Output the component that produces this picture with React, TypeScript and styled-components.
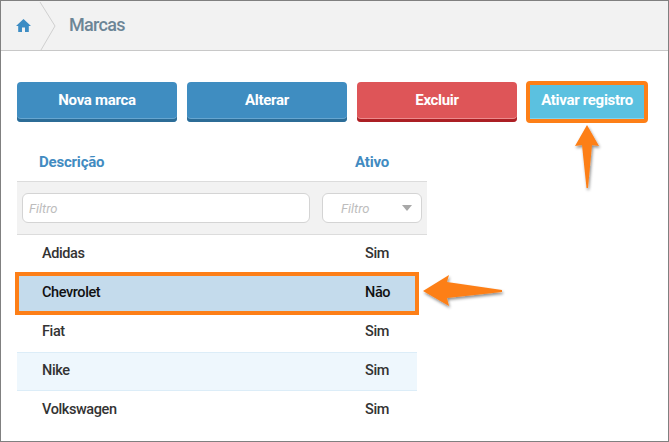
import React from "react";
import styled, { createGlobalStyle } from "styled-components";

const Global = createGlobalStyle`
  html, body { margin: 0; padding: 0; background: #fff; }
  * { box-sizing: border-box; }
`;

const Page = styled.div`
  position: relative;
  width: 669px;
  height: 442px;
  border: 1px solid #808080;
  background: #fff;
  overflow: hidden;
  font-family: Roboto, "Liberation Sans", sans-serif;
  color: #333;
`;

const Breadcrumb = styled.header`
  display: flex;
  align-items: center;
  height: 50px;
  background: #f2f2f2;
  border-bottom: 1px solid #c8c8c8;
`;

const HomeLink = styled.div`
  display: flex;
  align-items: center;
  width: 53px;
  height: 49px;
  padding-left: 15px;
  flex: none;
  position: relative;
`;

const Chevron = styled.svg`
  position: absolute;
  left: 38px;
  top: 0;
`;

const Crumb = styled.span`
  margin-left: 15px;
  padding-bottom: 2px;
  font-size: 18px;
  font-weight: 500;
  letter-spacing: -0.7px;
  color: #6c8596;
`;

const Content = styled.main`
  padding: 31px 0 0 16px;
`;

const Toolbar = styled.div`
  display: flex;
  gap: 10px;
`;

const Button = styled.button<{ $bg: string; $edge: string; $line: string; $w: number; $mark?: boolean }>`
  width: ${(p) => p.$w}px;
  height: 40px;
  padding: 0 0 4px;
  border: 0;
  border-radius: 4px;
  background: ${(p) => p.$bg};
  box-shadow: inset 0 -3px 0 ${(p) => p.$edge}, inset 0 -4px 0 ${(p) => p.$line};
  color: #fff;
  font-family: inherit;
  font-size: 15px;
  font-weight: 700;
  letter-spacing: -0.3px;
  ${(p) => p.$mark && "outline: 4px solid #fd7f17; outline-offset: -3px; border-radius: 3px;"}
`;

const Table = styled.div`
  margin-top: 20px;
  width: 410px;
`;

const HeadRow = styled.div`
  display: grid;
  grid-template-columns: 338px 72px;
  height: 39px;
  align-items: center;
  font-size: 15px;
  font-weight: 700;
  letter-spacing: -0.2px;
  color: #428bc1;
`;

const HeadDesc = styled.span`
  padding-left: 22px;
`;

const HeadActive = styled.span`
  padding-left: 0;
`;

const FilterRow = styled.div`
  display: flex;
  align-items: center;
  height: 54px;
  padding: 0 5px;
  gap: 12px;
  background: #f2f2f2;
  border-top: 1px solid #dcdcdc;
  border-bottom: 1px solid #dcdcdc;
`;

const FilterInput = styled.div`
  display: flex;
  align-items: center;
  width: 288px;
  height: 30px;
  padding-left: 6px;
  background: #fff;
  border: 1px solid #d4d4d4;
  border-radius: 6px;
  font-size: 13px;
  font-style: italic;
  color: #bdbdbd;
`;

const FilterSelect = styled(FilterInput)`
  width: 100px;
  padding: 0 9px 0 18px;
  justify-content: space-between;
`;

const Caret = styled.span`
  width: 0;
  height: 0;
  border-left: 5px solid transparent;
  border-right: 5px solid transparent;
  border-top: 6px solid #a8a8a8;
`;

const Row = styled.div<{ $state?: "selected" | "alt" }>`
  display: grid;
  grid-template-columns: 348px 52px;
  width: 400px;
  height: 39px;
  padding-bottom: 3px;
  align-items: center;
  font-size: 14.5px;
  font-weight: 500;
  letter-spacing: -0.4px;
  color: ${(p) => (p.$state === "selected" ? "#111" : "#333")};
  background: ${(p) => (p.$state === "selected" ? "#c4dbec" : p.$state === "alt" ? "#eef7fd" : "#fff")};
  ${(p) => p.$state === "alt" && "box-shadow: inset 0 1px 0 #dcedf8, inset 0 -1px 0 #dcedf8;"}
  ${(p) => p.$state === "selected" && "outline: 4px solid #fd7f17; outline-offset: -2px;"}
`;

const NameCell = styled.span`
  padding-left: 25px;
`;

const ArrowLayer = styled.svg`
  position: absolute;
  left: 0;
  top: 0;
  pointer-events: none;
  overflow: visible;
`;

const rows: { name: string; active: string; state?: "selected" | "alt" }[] = [
  { name: "Adidas", active: "Sim" },
  { name: "Chevrolet", active: "Não", state: "selected" },
  { name: "Fiat", active: "Sim" },
  { name: "Nike", active: "Sim", state: "alt" },
  { name: "Volkswagen", active: "Sim" },
];

export default function App() {
  return (
    <Page>
      <Global />
      <Breadcrumb>
        <HomeLink>
          <svg width="15" height="13" viewBox="0 0 15 13">
            <path d="M7.5 0 L15 7 H12.8 V13 H9 V8.5 H6 V13 H2.2 V7 H0 Z" fill="#3d8dc4" />
          </svg>
          <Chevron width="18" height="50" viewBox="0 0 18 50">
            <path d="M1 1 L16 25 L2 49" fill="none" stroke="#d0d0d0" strokeWidth="1" />
          </Chevron>
        </HomeLink>
        <Crumb>Marcas</Crumb>
      </Breadcrumb>
      <Content>
        <Toolbar>
          <Button $w={160} $bg="#3f8dc1" $edge="#2c6c96" $line="#67a6d0">Nova marca</Button>
          <Button $w={160} $bg="#3f8dc1" $edge="#2c6c96" $line="#67a6d0">Alterar</Button>
          <Button $w={160} $bg="#de5558" $edge="#ab1f24" $line="#ec8b8d">Excluir</Button>
          <Button $w={120} $bg="#5bc1e0" $edge="#5bc1e0" $line="#7fd4ee" $mark>Ativar registro</Button>
        </Toolbar>
        <Table>
          <HeadRow>
            <HeadDesc>Descrição</HeadDesc>
            <HeadActive>Ativo</HeadActive>
          </HeadRow>
          <FilterRow>
            <FilterInput>Filtro</FilterInput>
            <FilterSelect>Filtro<Caret /></FilterSelect>
          </FilterRow>
          {rows.map((r) => (
            <Row key={r.name} $state={r.state}>
              <NameCell>{r.name}</NameCell>
              <span>{r.active}</span>
            </Row>
          ))}
        </Table>
      </Content>
      <ArrowLayer width="669" height="442" viewBox="1 1 669 442">
        <defs>
          <filter id="sh" x="-30%" y="-30%" width="160%" height="160%">
            <feDropShadow dx="1" dy="2" stdDeviation="1.5" floodColor="#000" floodOpacity="0.45" />
          </filter>
        </defs>
        <path d="M587 125 L599 146 L592 145 L588 188 L586.500 188 L582 145 L575 146 Z" fill="#fd7f17" filter="url(#sh)" />
        <path d="M423 291 L449 275 L447 282 L502 290 L502 292 L447 298 L449 306 Z" fill="#fd7f17" filter="url(#sh)" />
      </ArrowLayer>
    </Page>
  );
}
